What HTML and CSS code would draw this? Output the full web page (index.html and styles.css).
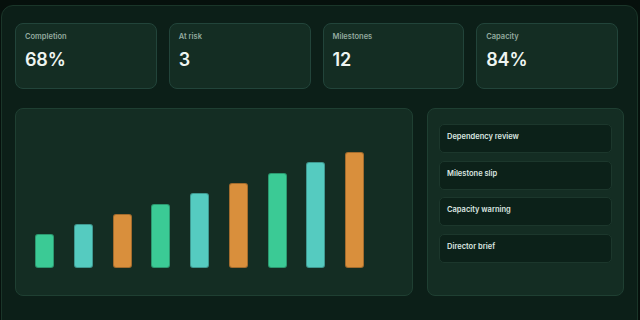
FILE: index.html
```html
<!DOCTYPE html>
<html lang="en">
<head>
  <meta charset="UTF-8" />
  <meta name="viewport" content="width=device-width, initial-scale=1.0"/>
  <title>Project Overview</title>
  <link rel="stylesheet" href="styles.css">
</head>
<body>
  <main class="shell">
    <section class="stats">
      <div class="stat">
        <p class="stat-label">Completion</p>
        <p class="stat-value">68%</p>
      </div>
      <div class="stat">
        <p class="stat-label">At risk</p>
        <p class="stat-value">3</p>
      </div>
      <div class="stat">
        <p class="stat-label">Milestones</p>
        <p class="stat-value">12</p>
      </div>
      <div class="stat">
        <p class="stat-label">Capacity</p>
        <p class="stat-value">84%</p>
      </div>
    </section>

    <section class="main-row">
      <div class="chart">
        <div class="bars">
          <span class="bar green" style="height: 34px"></span>
          <span class="bar teal" style="height: 44px"></span>
          <span class="bar orange" style="height: 54px"></span>
          <span class="bar green" style="height: 64px"></span>
          <span class="bar teal" style="height: 75px"></span>
          <span class="bar orange" style="height: 85px"></span>
          <span class="bar green" style="height: 95px"></span>
          <span class="bar teal" style="height: 106px"></span>
          <span class="bar orange" style="height: 116px"></span>
        </div>
      </div>

      <aside class="alerts">
        <div class="alert">Dependency review</div>
        <div class="alert">Milestone slip</div>
        <div class="alert">Capacity warning</div>
        <div class="alert">Director brief</div>
      </aside>
    </section>
  </main>
</body>
</html>
```

FILE: styles.css
```css
* {
  margin: 0;
  box-sizing: border-box;
  font-family: Inter, "Noto Sans", sans-serif;
}
body {
  background-color: #06100c;
  padding: 5px 2px 0 1px;
  height: 320px;
  overflow: hidden;
}
.shell {
  background-color: #0c1f18;
  border: 1px solid #1a3529;
  border-radius: 12px;
  padding: 17px 13px 20px 13px;
  min-height: 330px;
}
.stats {
  display: grid;
  grid-template-columns: repeat(4, 1fr);
  gap: 12px;
  margin-right: 6px;
}
.stat {
  height: 66px;
  background-color: #142d23;
  border: 1px solid #22443a;
  border-radius: 8px;
  padding: 8px 9px;
}
.stat-label {
  font-size: 7.5px;
  line-height: 10px;
  font-weight: 600;
  color: #93aa9f;
}
.stat-value {
  margin-top: 7px;
  font-size: 18px;
  line-height: 22px;
  font-weight: 600;
  letter-spacing: -0.01em;
  color: #eef5f1;
}
.main-row {
  display: flex;
  gap: 14px;
  margin-top: 19px;
}
.chart {
  width: 398px;
  height: 188px;
  background-color: #142d23;
  border: 1px solid #1f3f32;
  border-radius: 8px;
  padding: 0 19px 27px 19px;
  display: flex;
  align-items: flex-end;
}
.bars {
  display: flex;
  align-items: flex-end;
  gap: 19.75px;
}
.bar {
  width: 19px;
  border-radius: 3px;
  border: 1px solid rgba(0, 0, 0, 0.25);
}
.green { background-color: #3bca95; }
.teal { background-color: #55cbc0; }
.orange { background-color: #d98f3c; }
.alerts {
  width: 197px;
  height: 188px;
  background-color: #142d23;
  border: 1px solid #1f3f32;
  border-radius: 8px;
  padding: 15px 11px;
  display: flex;
  flex-direction: column;
  gap: 7.5px;
}
.alert {
  height: 29px;
  background-color: #0c2119;
  border: 1px solid #1c372c;
  border-radius: 5px;
  padding: 7px 7px;
  font-size: 7.5px;
  line-height: 10px;
  font-weight: 600;
  color: #dce7e1;
}
```
